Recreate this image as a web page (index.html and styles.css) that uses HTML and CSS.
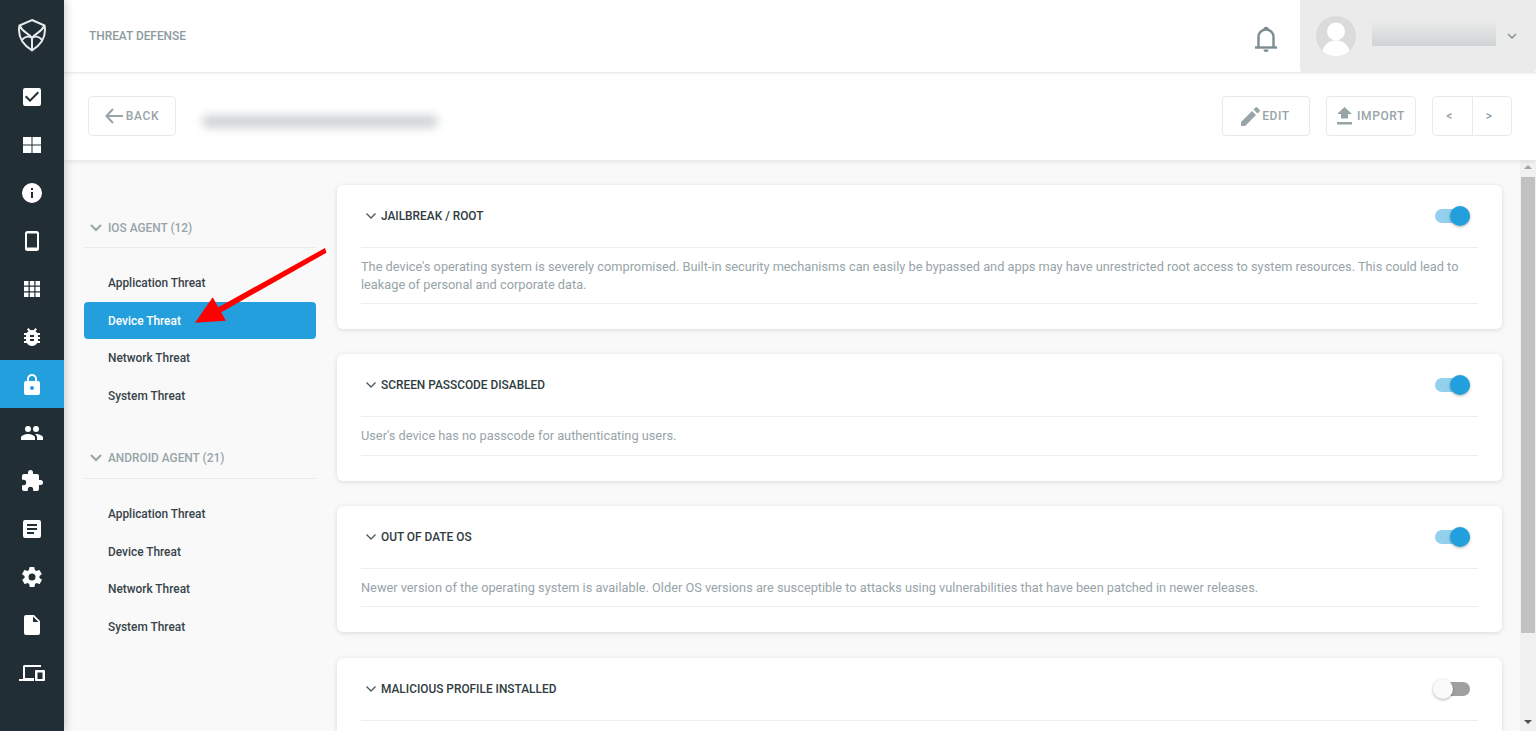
FILE: index.html
```html
<!DOCTYPE html>
<html lang="en">
<head>
<meta charset="utf-8">
<title>Threat Defense</title>
<link rel="stylesheet" href="styles.css">
</head>
<body>
<div class="app">
  <nav class="rail">
    <div class="rail-logo">
      <svg width="30" height="34" viewBox="0 0 30 34" fill="none" stroke="#e6eaeb" stroke-width="2"><path d="M15 2 L27.500 7.500 C29 15 28 24 15 32.500 C2 24 1 15 2.500 7.500 Z"/><path d="M2.500 7.500 C6 15 12 15 15 20 C18 15 24 15 27.500 7.500"/><path d="M15 20 V32"/><path d="M5 22 C8 18 12 18 15 20 C18 18 22 18 25 22"/></svg>
    </div>
    <a class="rail-item"><svg width="24" height="24" viewBox="0 0 24 24"><path fill="#fff" d="M19 3H5a2 2 0 0 0-2 2v14a2 2 0 0 0 2 2h14a2 2 0 0 0 2-2V5a2 2 0 0 0-2-2zm-9 14-5-5 1.400-1.400 3.600 3.600 7.600-7.600L19 8z"/></svg></a>
    <a class="rail-item"><svg width="24" height="24" viewBox="0 0 24 24"><path fill="#fff" d="M3 4h8.500v7.500H3zM12.500 4H21v7.500h-8.500zM3 12.500h8.500V20H3zM12.500 12.500H21V20h-8.500z"/></svg></a>
    <a class="rail-item"><svg width="24" height="24" viewBox="0 0 24 24"><path fill="#fff" d="M12 2a10 10 0 1 0 0 20 10 10 0 0 0 0-20zm1 15h-2v-6h2zm0-8h-2V7h2z"/></svg></a>
    <a class="rail-item"><svg width="24" height="24" viewBox="0 0 24 24"><path fill="#fff" d="M16.500 2h-9A2.500 2.500 0 0 0 5 4.500v15A2.500 2.500 0 0 0 7.500 22h9a2.500 2.500 0 0 0 2.500-2.500v-15A2.500 2.500 0 0 0 16.500 2zM17 18.500H7v-14h10z"/></svg></a>
    <a class="rail-item"><svg width="24" height="24" viewBox="0 0 24 24"><path fill="#fff" d="M4 4h4.500v4.500H4zM9.800 4h4.500v4.500H9.800zM15.500 4H20v4.500h-4.500zM4 9.800h4.500v4.500H4zM9.800 9.800h4.500v4.500H9.800zM15.500 9.800H20v4.500h-4.500zM4 15.500h4.500V20H4zM9.800 15.500h4.500V20H9.800zM15.500 15.500H20V20h-4.500z"/></svg></a>
    <a class="rail-item"><svg width="24" height="24" viewBox="0 0 24 24"><path fill="#fff" d="M20 8h-2.800a6 6 0 0 0-1.800-2l1.600-1.600L15.600 3l-2.200 2.200a6 6 0 0 0-2.800 0L8.400 3 7 4.400 8.600 6a6 6 0 0 0-1.800 2H4v2h2.100a6 6 0 0 0-.1 1v1H4v2h2v1c0 .3 0 .7.100 1H4v2h2.800a6 6 0 0 0 10.400 0H20v-2h-2.100c.1-.3.1-.7.100-1v-1h2v-2h-2v-1c0-.3 0-.7-.1-1H20zm-6 8h-4v-2h4zm0-4h-4v-2h4z"/></svg></a>
    <a class="rail-item is-active"><svg width="24" height="24" viewBox="0 0 24 24"><path fill="#fff" d="M18 8h-1V6a5 5 0 0 0-10 0v2H6a2 2 0 0 0-2 2v10a2 2 0 0 0 2 2h12a2 2 0 0 0 2-2V10a2 2 0 0 0-2-2zm-6 9a2 2 0 1 1 0-4 2 2 0 0 1 0 4zm3.100-9H8.900V6a3.100 3.100 0 0 1 6.200 0z"/></svg></a>
    <a class="rail-item"><svg width="24" height="24" viewBox="0 0 24 24"><path fill="#fff" d="M16 11a3 3 0 1 0 0-6 3 3 0 0 0 0 6zm-8 0a3 3 0 1 0 0-6 3 3 0 0 0 0 6zm0 2c-2.300 0-7 1.200-7 3.500V19h14v-2.500C15 14.200 10.300 13 8 13zm8 0h-1c1.200.9 2 2 2 3.500V19h6v-2.500c0-2.300-4.700-3.500-7-3.500z"/></svg></a>
    <a class="rail-item"><svg width="24" height="24" viewBox="0 0 24 24"><path fill="#fff" d="M20.500 11H19V7a2 2 0 0 0-2-2h-4V3.500a2.500 2.500 0 0 0-5 0V5H4a2 2 0 0 0-2 2v3.800h1.500a2.700 2.700 0 0 1 0 5.400H2V20a2 2 0 0 0 2 2h3.800v-1.500a2.700 2.700 0 0 1 5.400 0V22H17a2 2 0 0 0 2-2v-4h1.500a2.500 2.500 0 0 0 0-5z"/></svg></a>
    <a class="rail-item"><svg width="24" height="24" viewBox="0 0 24 24"><path fill="#fff" d="M19 3H5a2 2 0 0 0-2 2v14a2 2 0 0 0 2 2h14a2 2 0 0 0 2-2V5a2 2 0 0 0-2-2zm-5 14H7v-2h7zm3-4H7v-2h10zm0-4H7V7h10z"/></svg></a>
    <a class="rail-item"><svg width="24" height="24" viewBox="0 0 24 24"><path fill="#fff" d="M19.400 13a7.500 7.500 0 0 0 0-2l2.100-1.600a.5.500 0 0 0 .1-.6l-2-3.500a.5.500 0 0 0-.6-.2l-2.500 1a7.300 7.300 0 0 0-1.700-1l-.4-2.700a.5.500 0 0 0-.5-.4h-4a.5.500 0 0 0-.5.400l-.4 2.700a7.300 7.300 0 0 0-1.700 1l-2.500-1a.5.500 0 0 0-.6.2l-2 3.500a.5.500 0 0 0 .1.600L4.600 11a7.500 7.500 0 0 0 0 2l-2.100 1.600a.5.500 0 0 0-.1.600l2 3.500c.1.200.4.300.6.200l2.500-1c.5.400 1.100.7 1.700 1l.4 2.700c0 .2.200.4.500.4h4c.3 0 .5-.2.500-.4l.4-2.700a7.300 7.300 0 0 0 1.700-1l2.500 1c.2.100.5 0 .6-.2l2-3.500a.5.500 0 0 0-.1-.6zM12 15.500a3.500 3.500 0 1 1 0-7 3.500 3.500 0 0 1 0 7z"/></svg></a>
    <a class="rail-item"><svg width="24" height="24" viewBox="0 0 24 24"><path fill="#fff" d="M14 2H6a2 2 0 0 0-2 2v16a2 2 0 0 0 2 2h12a2 2 0 0 0 2-2V8zm-1 7V3.500L18.500 9z"/></svg></a>
    <a class="rail-item"><svg width="28" height="24" viewBox="0 0 28 24"><path fill="#fff" d="M5 5.500A1.500 1.500 0 0 1 6.500 4H23v2H7v11h9v3H1v-2h4zM18 9h8a1 1 0 0 1 1 1v9a1 1 0 0 1-1 1h-8a1 1 0 0 1-1-1v-9a1 1 0 0 1 1-1zm1.500 2.500V18h5v-6.500z"/></svg></a>
  </nav>

  <div class="main">
    <header class="topbar">
      <div class="page-label">THREAT DEFENSE</div>
      <div class="bell">
        <svg width="28" height="30" viewBox="0 0 28 30" fill="none" stroke="#7d8c91" stroke-width="2.400"><path d="M3 24.500h22"/><path d="M6.500 24V14a7.500 7.500 0 0 1 15 0v10"/><path d="M12.500 6.500c0-2 3-2 3 0"/><path fill="#7d8c91" stroke="none" d="M11.500 26.500h5a2.500 2.500 0 0 1-5 0z"/></svg>
      </div>
      <div class="account">
        <div class="avatar">
          <svg width="40" height="40" viewBox="0 0 40 40"><circle cx="20" cy="20" r="20" fill="#dbdbdb"/><circle cx="20" cy="15.500" r="9" fill="#fff"/><path fill="#fff" d="M6.500 35c2-8 7.500-10.500 13.500-10.500s11.500 2.500 13.500 10.500a20 20 0 0 1-27 0z"/></svg>
        </div>
        <div class="account-name"></div>
        <svg class="account-caret" width="10" height="6" viewBox="0 0 10 6" fill="none" stroke="#7d8c91" stroke-width="1.300"><path d="M1 1l4 4 4-4"/></svg>
      </div>
    </header>

    <div class="subbar">
      <button class="btn btn-back">
        <svg width="18" height="16" viewBox="0 0 18 16" fill="none" stroke="#97a4a8" stroke-width="2"><path d="M8 1L1.500 8 8 15M2 8h16"/></svg>
        <span>BACK</span>
      </button>
      <div class="blur-title"></div>
      <div class="subbar-actions">
        <button class="btn btn-edit">
          <svg width="19" height="19" viewBox="0 0 19 19"><path fill="#97a4a8" d="M0 15v4h4L15 8l-4-4zM18.500 4.500a1.200 1.200 0 0 0 0-1.700L16.200.500a1.200 1.200 0 0 0-1.700 0L12.500 2.500l4 4z"/></svg>
          <span>EDIT</span>
        </button>
        <button class="btn btn-import">
          <svg width="15" height="18" viewBox="0 0 15 18"><path fill="#97a4a8" d="M4 11.500V7H0l7.500-7L15 7h-4v4.500zM0 15h15v2.500H0z"/></svg>
          <span>IMPORT</span>
        </button>
        <div class="pager">
          <button class="pager-btn">&lt;</button>
          <button class="pager-btn">&gt;</button>
        </div>
      </div>
    </div>

    <div class="body">
      <aside class="groups">
        <section class="group">
          <h3 class="group-title"><svg width="12" height="8" viewBox="0 0 12 8" fill="none" stroke="#97a4a8" stroke-width="2"><path d="M1 1l5 5 5-5"/></svg>IOS AGENT (12)</h3>
          <ul class="group-list">
            <li>Application Threat</li>
            <li class="is-current">Device Threat</li>
            <li>Network Threat</li>
            <li>System Threat</li>
          </ul>
        </section>
        <section class="group">
          <h3 class="group-title"><svg width="12" height="8" viewBox="0 0 12 8" fill="none" stroke="#97a4a8" stroke-width="2"><path d="M1 1l5 5 5-5"/></svg>ANDROID AGENT (21)</h3>
          <ul class="group-list">
            <li>Application Threat</li>
            <li>Device Threat</li>
            <li>Network Threat</li>
            <li>System Threat</li>
          </ul>
        </section>
      </aside>

      <div class="cards">
        <article class="card">
          <div class="card-head">
            <svg width="10" height="6" viewBox="0 0 10 6" fill="none" stroke="#4a565b" stroke-width="1.300"><path d="M.5.500L5 5 9.500.500"/></svg>
            <h4>JAILBREAK / ROOT</h4>
            <span class="switch is-on"></span>
          </div>
          <p class="card-text">The device's operating system is severely compromised. Built-in security mechanisms can easily be bypassed and apps may have unrestricted root access to system resources. This could lead to leakage of personal and corporate data.</p>
        </article>
        <article class="card">
          <div class="card-head">
            <svg width="10" height="6" viewBox="0 0 10 6" fill="none" stroke="#4a565b" stroke-width="1.300"><path d="M.5.500L5 5 9.500.500"/></svg>
            <h4>SCREEN PASSCODE DISABLED</h4>
            <span class="switch is-on"></span>
          </div>
          <p class="card-text">User's device has no passcode for authenticating users.</p>
        </article>
        <article class="card">
          <div class="card-head">
            <svg width="10" height="6" viewBox="0 0 10 6" fill="none" stroke="#4a565b" stroke-width="1.300"><path d="M.5.500L5 5 9.500.500"/></svg>
            <h4>OUT OF DATE OS</h4>
            <span class="switch is-on"></span>
          </div>
          <p class="card-text">Newer version of the operating system is available. Older OS versions are susceptible to attacks using vulnerabilities that have been patched in newer releases.</p>
        </article>
        <article class="card">
          <div class="card-head">
            <svg width="10" height="6" viewBox="0 0 10 6" fill="none" stroke="#4a565b" stroke-width="1.300"><path d="M.5.500L5 5 9.500.500"/></svg>
            <h4>MALICIOUS PROFILE INSTALLED</h4>
            <span class="switch"></span>
          </div>
        </article>
      </div>

      <div class="scrollbar">
        <span class="scroll-arrow scroll-up"></span>
        <div class="scroll-track"><div class="scroll-thumb"></div></div>
        <span class="scroll-arrow scroll-down"></span>
      </div>

      <svg class="annotation" width="140" height="84" viewBox="0 0 140 84"><path fill="#ff0000" d="M134 2L26 62 29 67 135.500 6.700z"/><path fill="#ff0000" d="M4 76.700L21.700 51.300 35 74.700z"/></svg>
    </div>
  </div>
</div>
</body>
</html>
```

FILE: styles.css
```css
* { box-sizing: border-box; }
html, body { margin: 0; height: 100%; overflow: hidden; }
body { font-family: Roboto, "Liberation Sans", sans-serif; color: #2f3b40; background: #fff; }

.app { display: flex; height: 731px; }

.rail { width: 64px; flex: none; background: #212e36; display: flex; flex-direction: column; position: relative; z-index: 3; box-shadow: 2px 0 8px rgba(0,0,0,.18); }
.rail-logo { height: 72px; display: flex; align-items: center; justify-content: center; padding-bottom: 2px; }
.rail-item { height: 48px; display: flex; align-items: center; justify-content: center; padding-top: 1px; }
.rail-item.is-active { background: #239fdd; }

.main { flex: 1; min-width: 0; display: flex; flex-direction: column; }

.topbar { height: 73px; flex: none; display: flex; align-items: stretch; background: #fff; border-bottom: 1px solid #e8ecec; box-shadow: 0 1px 3px rgba(0,0,0,.06); position: relative; z-index: 2; }
.page-label { flex: 1; padding-left: 25px; font-size: 11.880px; font-weight: 500; color: #8c9a9f; line-height: 73px; }
.bell { width: 64px; display: flex; align-items: center; justify-content: center; padding-top: 3px; margin-right: 3px; }
.bell svg { margin-left: 2px; }
.account { width: 236px; background: #ebebeb; display: flex; align-items: center; padding-left: 16px; border-radius: 0 0 3px 3px; }
.avatar { width: 40px; height: 40px; flex: none; }
.account-name { width: 124px; height: 26px; margin: 0 0 6px 16px; background: linear-gradient(#ebebeb, #cfd3d5); }
.account-caret { margin-left: 11px; }

.subbar { height: 87px; flex: none; display: flex; align-items: center; background: #fff; padding: 0 24px 1px; box-shadow: 0 1px 6px rgba(0,0,0,.1); position: relative; z-index: 1; }
.btn { height: 40px; display: flex; align-items: center; justify-content: center; gap: 3px; background: #fff; border: 1px solid #e6eaea; border-radius: 4px; font: 500 12px Roboto, sans-serif; letter-spacing: .6px; color: #97a4a8; padding: 0; }
.btn-back { width: 88px; }
.btn-edit { width: 88px; gap: 2px; padding-right: 1px; }
.btn-import { width: 90px; gap: 5px; }
.blur-title { width: 236px; height: 13px; margin: 10px 0 0 26px; background: #d0d4d6; border-radius: 6px; filter: blur(5px); }
.subbar-actions { margin-left: auto; display: flex; align-items: center; gap: 16px; }
.pager { display: flex; width: 80px; height: 40px; border: 1px solid #e6eaea; border-radius: 4px; }
.pager-btn { flex: 1; background: none; border: 0; font: 500 12px Roboto, sans-serif; color: #97a4a8; padding: 0 6px 0 0; }
.pager-btn + .pager-btn { border-left: 1px solid #e6eaea; }

.body { flex: 1; min-height: 0; display: flex; background: #f9f9f9; position: relative; overflow: hidden; }

.groups { width: 252px; flex: none; padding: 47px 0 0 20px; }
.group { margin-bottom: 23.600px; }
.group-title { margin: 0; height: 41px; padding: 1px 0 0 6px; display: flex; align-items: center; gap: 6px; font-size: 11.880px; font-weight: 500; color: #97a4a8; border-bottom: 1px solid #e9ecec; }
.group-list { list-style: none; margin: 16px 0 0; padding: 0; }
.group-list li { height: 37.600px; line-height: 38px; padding-left: 24px; font-size: 11.880px; font-weight: 500; color: #37434a; border-radius: 4px; }
.group-list li.is-current { background: #239fdd; color: #fff; }

.cards { flex: 1; min-width: 0; padding: 25px 18px 0 21px; display: flex; flex-direction: column; gap: 25.800px; }
.card { flex: none; background: #fff; border-radius: 6px; padding: 0 24px 25px; box-shadow: 0 1px 5px rgba(0,0,0,.13); }
.card-head { height: 63px; display: flex; align-items: center; gap: 5px; border-bottom: 1px solid #eceeee; padding: 0 8px 1px 5px; }
.card-head h4 { margin: 0; flex: 1; font-size: 11.880px; font-weight: 500; color: #2f3b40; }
.card-text { margin: 0; padding: 10px 0 9.500px; font-size: 12.780px; line-height: 17.600px; color: #97a4a8; border-bottom: 1px solid #eceeee; }

.switch { position: relative; width: 35px; height: 14px; border-radius: 7px; background: #a0a0a0; flex: none; }
.switch::after { content: ""; position: absolute; left: -2px; top: -3px; width: 20px; height: 20px; border-radius: 50%; background: #fafafa; box-shadow: 0 1px 3px rgba(0,0,0,.3); }
.switch.is-on { background: #93d0ee; }
.switch.is-on::after { left: 15px; background: #239fdd; }

.scrollbar { width: 16px; flex: none; background: #f1f1f1; display: flex; flex-direction: column; position: relative; }
.scroll-arrow { height: 17px; flex: none; position: relative; }
.scroll-arrow::after { content: ""; position: absolute; left: 4px; border-left: 4px solid transparent; border-right: 4px solid transparent; }
.scroll-up::after { top: 5px; border-bottom: 4px solid #a3a3a3; }
.scroll-down::after { top: 6px; border-top: 4px solid #505050; }
.scroll-track { flex: 1; }
.scroll-thumb { height: 456px; background: #c1c1c1; margin: 0 1px; }

.annotation { position: absolute; left: 127px; top: 86px; z-index: 1; }
```
